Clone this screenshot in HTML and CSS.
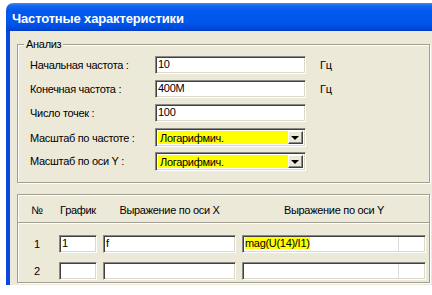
FILE: index.html
```html
<!DOCTYPE html>
<html lang="ru">
  <head>
    <meta charset="UTF-8" />
    <title>Частотные характеристики</title>
    <link rel="stylesheet" href="styles.css">
  </head>
  <body>
    <div class="window">
      <div class="titlebar">Частотные характеристики</div>

      <div class="frame">
        <div class="group analysis">
          <span class="legend">Анализ</span>

          <div class="form">
            <label>Начальная частота :</label>
            <div class="edit">10</div>
            <span class="unit">Гц</span>

            <label>Конечная частота :</label>
            <div class="edit">400M</div>
            <span class="unit">Гц</span>

            <label>Число точек :</label>
            <div class="edit">100</div>
            <span></span>

            <label class="first-combo">Масштаб по частоте :</label>
            <div class="combo first-combo">
              <span class="combo-text">Логарифмич.</span>
              <span class="combo-btn"><i class="arrow"></i></span>
            </div>
            <span></span>

            <label>Масштаб по оси Y :</label>
            <div class="combo">
              <span class="combo-text">Логарифмич.</span>
              <span class="combo-btn"><i class="arrow"></i></span>
            </div>
            <span></span>
          </div>
        </div>
        <!-- .analysis -->

        <div class="group plots">
          <div class="plot-grid head">
            <span>№</span>
            <span>График</span>
            <span>Выражение по оси X</span>
            <span>Выражение по оси Y</span>
          </div>
          <div class="sep"></div>

          <div class="plot-grid rows">
            <span class="num">1</span>
            <div class="edit">1</div>
            <div class="edit">f</div>
            <div class="edit split"><span class="mark">mag(U(14)/I1)</span></div>

            <span class="num">2</span>
            <div class="edit"></div>
            <div class="edit"></div>
            <div class="edit split"></div>
          </div>
        </div>
        <!-- .plots -->
      </div>
      <!-- .frame -->
    </div>
  </body>
</html>
```

FILE: styles.css
```css
* {
  box-sizing: border-box;
  margin: 0;
  padding: 0;
}

html,
body {
  width: 432px;
  height: 295px;
  overflow: hidden;
  background-color: #fff;
}

body {
  font-family: 'Liberation Sans', Arial, sans-serif;
  font-size: 11px;
  letter-spacing: -0.3px;
  color: #000;
}

.window {
  width: 440px;
  margin: 3px 0 0 6px;
}

.titlebar {
  height: 28px;
  padding: 3px 0 0 6px;
  line-height: 25px;
  font-size: 13px;
  font-weight: bold;
  letter-spacing: -0.15px;
  color: #fff;
  border-radius: 7px 7px 0 0;
  background: linear-gradient(
    to bottom,
    #3b8cf8 0,
    #1565f0 3px,
    #0058ee 8px,
    #0056ea 20px,
    #0047d6 26px,
    #003cc4 28px
  );
}

.frame {
  height: 254px;
  padding: 13px 0 0 7px;
  border-left: 4px solid #0a48dc;
  background-color: #ece9d8;
}

.group {
  position: relative;
  width: 413px;
  border: 1px solid #a19f94;
  box-shadow: 1px 1px 0 #fff, inset 1px 1px 0 #fff;
}

.legend {
  position: absolute;
  top: -8px;
  left: 6px;
  padding: 0 2px;
  line-height: 14px;
  background-color: #ece9d8;
}

.analysis {
  height: 139px;
  padding: 11px 0 0 12px;
}

.form {
  display: grid;
  grid-template-columns: 125px 151px auto;
  grid-auto-rows: 18px;
  row-gap: 6px;
  align-items: center;
}

.form .unit {
  padding-left: 14px;
}

.form .first-combo {
  margin-top: 1px;
}

.edit {
  height: 18px;
  padding-left: 2px;
  line-height: 14px;
  background-color: #fff;
  border-top: 1px solid #8a8a84;
  border-left: 1px solid #8a8a84;
  border-bottom: 1px solid #fff;
  border-right: 1px solid #fff;
  box-shadow: inset 1px 1px 0 #404040, inset -1px -1px 0 #dcd9cc;
  white-space: nowrap;
  overflow: hidden;
}

.edit.split {
  background: linear-gradient(
      to right,
      transparent 155px,
      #dcdcdc 155px,
      #dcdcdc 156px,
      transparent 156px
    ),
    #fff;
}

.combo {
  display: flex;
  height: 19px;
  padding: 2px;
  border-top: 1px solid #8a8a84;
  border-left: 1px solid #8a8a84;
  border-bottom: 1px solid #fff;
  border-right: 1px solid #fff;
  box-shadow: inset 1px 1px 0 #404040, inset -1px -1px 0 #dcd9cc;
  background-color: #fff;
}

.combo-text {
  flex: 1;
  padding-left: 2px;
  line-height: 15px;
  background-color: #ffff00;
}

.combo-btn {
  display: flex;
  align-items: center;
  justify-content: center;
  width: 15px;
  background-color: #ece9d8;
  border-top: 1px solid #fff;
  border-left: 1px solid #fff;
  border-bottom: 1px solid #404040;
  border-right: 1px solid #404040;
  box-shadow: inset -1px -1px 0 #8a8a84;
}

.arrow {
  width: 0;
  height: 0;
  border-left: 4px solid transparent;
  border-right: 4px solid transparent;
  border-top: 4px solid #000;
  margin: 1px 1px 0 0;
}

.plots {
  height: 89px;
  margin-top: 11px;
  padding-top: 8px;
}

.plot-grid {
  display: grid;
  grid-template-columns: 32px 38px 133px 184px;
  column-gap: 6px;
  padding-left: 3px;
  align-items: center;
}

.head {
  line-height: 14px;
  text-align: center;
}

.sep {
  height: 2px;
  margin-top: 5px;
  border-top: 1px solid #a19f94;
  border-bottom: 1px solid #fff;
}

.rows {
  grid-auto-rows: 18px;
  row-gap: 9px;
  margin-top: 11px;
}

.num {
  text-align: center;
}

.mark {
  background-color: #ffff00;
}
```
